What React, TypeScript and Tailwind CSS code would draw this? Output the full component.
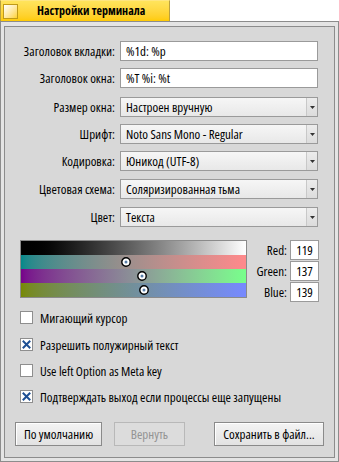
import React from "react";

const font = { fontFamily: '"Open Sans", "Noto Sans", sans-serif' };

function TextInput({ value }: { value: string }) {
  return (
    <div className="h-[20px] w-[198px] bg-white border border-[#9a9a9a] flex items-center pl-[5px] text-black">
      {value}
    </div>
  );
}

function Dropdown({ value }: { value: string }) {
  return (
    <div className="h-[20px] w-[198px] border border-[#9a9a9a] flex bg-gradient-to-b from-[#f6f6f6] to-[#e8e8e8] text-black">
      <div className="flex-1 flex items-center pl-[5px] border-r border-[#c8c8c8]">{value}</div>
      <div className="w-[10px] flex items-center justify-center bg-gradient-to-b from-[#ececec] to-[#dcdcdc]">
        <svg width="5" height="3" viewBox="0 0 5 3">
          <path d="M0 0 H5 L2.5 3 Z" fill="#333" />
        </svg>
      </div>
    </div>
  );
}

function Row({ label, children, mt }: { label: string; children: React.ReactNode; mt: string }) {
  return (
    <div className={`flex items-center h-[20px] ${mt}`}>
      <div className="w-[110px] text-right text-black whitespace-nowrap">{label}</div>
      <div className="ml-[5px]">{children}</div>
    </div>
  );
}

function Checkbox({ checked, label, mt }: { checked: boolean; label: string; mt: string }) {
  return (
    <div className={`flex items-center h-[17px] ${mt}`}>
      <div className="w-[13px] h-[13px] bg-white border border-[#8e8e8e] flex items-center justify-center">
        {checked && (
          <svg width="9" height="9" viewBox="0 0 9 9">
            <path d="M1.5 1.5 L7.5 7.5 M7.5 1.5 L1.5 7.5" stroke="#1d4f94" strokeWidth="2" strokeLinecap="square" />
          </svg>
        )}
      </div>
      <div className="ml-[7px] text-black whitespace-nowrap">{label}</div>
    </div>
  );
}

function Knob({ frac }: { frac: number }) {
  return (
    <div className="relative h-[14px]">
      <svg
        className="absolute top-[2px]"
        style={{ left: `${frac * 225 - 5}px` }}
        width="10"
        height="10"
        viewBox="0 0 10 10"
      >
        <circle cx="5" cy="5" r="4.2" fill="white" stroke="black" strokeWidth="1.4" />
        <circle cx="5" cy="5" r="1.5" fill="#5a7fa8" />
      </svg>
    </div>
  );
}

function Btn({ label, w, disabled }: { label: string; w: string; disabled?: boolean }) {
  return (
    <div
      className={`${w} h-[24px] flex items-center justify-center border whitespace-nowrap ${
        disabled
          ? "border-[#b8b8b8] text-[#939393] bg-[#dcdcdc]"
          : "border-[#8a8a8a] text-black bg-gradient-to-b from-[#f4f4f4] to-[#e2e2e2] shadow-[inset_1px_1px_0_#ffffff]"
      }`}
    >
      {label}
    </div>
  );
}

export default function App() {
  return (
    <div
      className="w-[339px] h-[462px] bg-white relative overflow-hidden text-[13px] leading-[16px] font-stretch-[75%]"
      style={font}
    >
      {/* tab */}
      <div className="h-[21px] w-[170px] border border-b-0 border-[#b9a040] border-t-[#ffe680] bg-gradient-to-b from-[#ffe45c] to-[#ffcb00] flex items-center">
        <div className="ml-[2px] w-[15px] h-[15px] border border-[#c09a18] bg-gradient-to-br from-[#ffffff] to-[#ffd21a]" />
        <div className="ml-[19px] font-bold text-black text-[12px] whitespace-nowrap">Настройки терминала</div>
      </div>
      {/* frame */}
      <div className="h-[441px] w-[339px] border border-[#8c8c8c] bg-[#e4e4e4] pt-[4px] px-[3px] pb-[3px]">
        <div className="h-full w-full border border-[#8c8c8c] bg-[#d8d8d8] flex flex-col">
          <div className="pt-[14px]">
            <Row label="Заголовок вкладки:" mt="mt-0">
              <TextInput value="%1d: %p" />
            </Row>
            <Row label="Заголовок окна:" mt="mt-[7px]">
              <TextInput value="%T %i: %t" />
            </Row>
            <Row label="Размер окна:" mt="mt-[9px]">
              <Dropdown value="Настроен вручную" />
            </Row>
            <Row label="Шрифт:" mt="mt-[7px]">
              <Dropdown value="Noto Sans Mono - Regular" />
            </Row>
            <Row label="Кодировка:" mt="mt-[7px]">
              <Dropdown value="Юникод (UTF-8)" />
            </Row>
            <Row label="Цветовая схема:" mt="mt-[8px]">
              <Dropdown value="Соляризированная тьма" />
            </Row>
            <Row label="Цвет:" mt="mt-[8px]">
              <Dropdown value="Текста" />
            </Row>
          </div>

          {/* color section */}
          <div className="flex mt-[13px] pl-[15px]">
            <div className="w-[227px] h-[58px] border border-[#8a8a8a] flex flex-col">
              <div className="h-[14px] bg-gradient-to-r from-[#000000] to-[#ffffff]" />
              <div className="h-[14px] bg-gradient-to-r from-[#00898b] to-[#ff898b]">
                <Knob frac={119 / 255} />
              </div>
              <div className="h-[14px] bg-gradient-to-r from-[#77008b] to-[#77ff8b]">
                <Knob frac={137 / 255} />
              </div>
              <div className="h-[14px] bg-gradient-to-r from-[#778900] to-[#7789ff]">
                <Knob frac={139 / 255} />
              </div>
            </div>
            <div className="ml-[5px] flex flex-col gap-[1px]">
              {[
                ["Red:", "119"],
                ["Green:", "137"],
                ["Blue:", "139"],
              ].map(([l, v]) => (
                <div key={l} className="flex items-center h-[20px]">
                  <div className="w-[35px] text-right text-black">{l}</div>
                  <div className="ml-[3px] w-[29px] h-[20px] bg-white border border-[#9a9a9a] flex items-center justify-center text-black">
                    {v}
                  </div>
                </div>
              ))}
            </div>
          </div>

          {/* checkboxes */}
          <div className="flex flex-col mt-[7px] pl-[15px]">
            <Checkbox mt="mt-0" checked={false} label="Мигающий курсор" />
            <Checkbox mt="mt-[10px]" checked={true} label="Разрешить полужирный текст" />
            <Checkbox mt="mt-[9px]" checked={false} label="Use left Option as Meta key" />
            <Checkbox mt="mt-[9px]" checked={true} label="Подтверждать выход если процессы еще запущены" />
          </div>

          {/* buttons */}
          <div className="flex mt-[17px] pl-[10px]">
            <Btn label="По умолчанию" w="w-[87px]" />
            <div className="ml-[12px]">
              <Btn label="Вернуть" w="w-[71px]" disabled />
            </div>
            <div className="ml-[29px]">
              <Btn label="Сохранить в файл..." w="w-[110px]" />
            </div>
          </div>
        </div>
      </div>
    </div>
  );
}
